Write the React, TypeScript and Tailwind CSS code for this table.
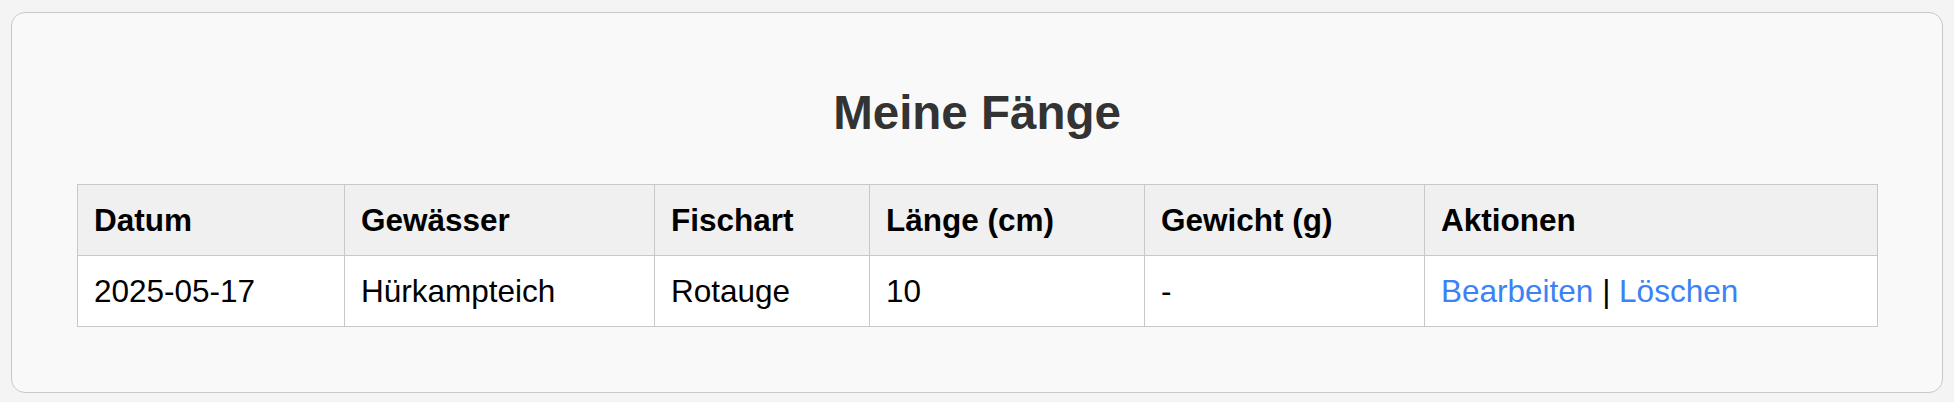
const catches = [
  {
    datum: "2025-05-17",
    gewaesser: "Hürkampteich",
    fischart: "Rotauge",
    laenge: "10",
    gewicht: "-",
  },
];

const headers = [
  { label: "Datum", width: "w-[267px]" },
  { label: "Gewässer", width: "w-[310px]" },
  { label: "Fischart", width: "w-[215px]" },
  { label: "Länge (cm)", width: "w-[275px]" },
  { label: "Gewicht (g)", width: "w-[280px]" },
  { label: "Aktionen", width: "w-[453px]" },
];

const cell = "border border-[#c8c8c8] px-[16px] py-[17px] leading-[36px] text-left";

export default function App() {
  return (
    <div className="min-h-screen bg-[#f4f4f4] py-[12px] px-[11px] font-['Liberation_Sans',Arial,sans-serif]">
      <div className="rounded-[14px] border border-[#c8c8c8] bg-[#f9f9f9] px-[65px] pt-[73px] pb-[65px]">
        <h2 className="mb-[44px] text-center text-[47.5px] font-bold leading-[54px] text-[#333333]">Meine Fänge</h2>
        <table className="w-full table-fixed border-collapse text-[31.5px] text-black">
          <thead>
            <tr className="bg-[#f0f0f0]">
              {headers.map((h) => (
                <th key={h.label} className={`${cell} ${h.width} font-bold`}>
                  {h.label}
                </th>
              ))}
            </tr>
          </thead>
          <tbody>
            {catches.map((c) => (
              <tr key={c.datum} className="bg-white">
                <td className={cell}>{c.datum}</td>
                <td className={cell}>{c.gewaesser}</td>
                <td className={cell}>{c.fischart}</td>
                <td className={cell}>{c.laenge}</td>
                <td className={cell}>{c.gewicht}</td>
                <td className={cell}>
                  <a href="#" className="text-[#3b82f6]">
                    Bearbeiten
                  </a>{" "}
                  |{" "}
                  <a href="#" className="text-[#3b82f6]">
                    Löschen
                  </a>
                </td>
              </tr>
            ))}
          </tbody>
        </table>
      </div>
    </div>
  );
}
